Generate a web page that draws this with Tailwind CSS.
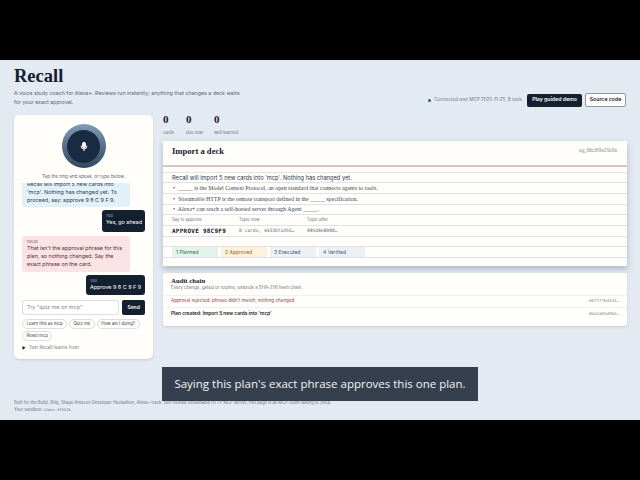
<!DOCTYPE html>
<html lang="en">
<head>
<meta charset="UTF-8">
<title>Recall</title>
<script src="https://cdn.jsdelivr.net/npm/@tailwindcss/browser@4"></script>
</head>
<body class="bg-black font-['Inter',sans-serif]">
<div class="w-[640px] h-[480px] flex flex-col overflow-hidden">
  <div class="h-[60px] bg-black shrink-0"></div>

  <main class="relative h-[360px] bg-[#e3eaf2] px-[14px] overflow-hidden">
    <!-- Header -->
    <header class="flex justify-between h-[55px]">
      <div class="w-[226px]">
        <h1 class="mt-[5px] font-['Liberation_Serif',serif] font-bold text-[18.5px] leading-[22px] text-[#14202f]">Recall</h1>
        <p class="mt-[2px] text-[5.3px] leading-[8.5px] text-[#5b6675]">A voice study coach for Alexa+. Reviews run instantly; anything that changes a deck waits for your exact approval.</p>
      </div>
      <div class="flex items-center h-[14px] mt-[33px]">
        <span class="w-[3px] h-[3px] rounded-full bg-[#1f6f5c] mr-[3px]"></span>
        <span class="text-[4.5px] text-[#6b7684] mr-[5px]">Connected over MCP 2025-11-25, 8 tools</span>
        <button class="h-[13px] w-[55px] rounded-[2px] bg-[#14202f] text-white text-[5.2px] font-semibold mr-[3px]">Play guided demo</button>
        <button class="h-[14px] w-[41px] rounded-[2px] border border-[#8d96a3] bg-[#fffefa] text-[#14202f] text-[5.2px] font-semibold">Source code</button>
      </div>
    </header>

    <div class="flex gap-[10px]">
      <!-- Voice and chat panel -->
      <section class="w-[139px] h-[244px] shrink-0 rounded-[5px] bg-[#fffefa] shadow-sm flex flex-col px-[8px]">
        <div class="mt-[9px] self-center w-[44px] h-[44px] rounded-full bg-gradient-to-b from-[#7f9cb6] to-[#34475e] flex items-center justify-center">
          <div class="w-[33px] h-[33px] rounded-full bg-[#1a2a40] flex items-center justify-center">
            <svg width="10" height="11" viewBox="0 0 24 24" fill="none" stroke="#fff" stroke-width="2.4" stroke-linecap="round">
              <rect x="8.5" y="2" width="7" height="13" rx="3.5" fill="#fff"></rect>
              <path d="M5 11a7 7 0 0 0 14 0M12 18v4"></path>
            </svg>
          </div>
        </div>
        <p class="mt-[5px] text-center text-[4.6px] leading-[7px] text-[#5b6675]">Tap the ring and speak, or type below.</p>

        <div class="mt-[3px] h-[112px] shrink-0 overflow-hidden flex flex-col justify-end gap-[3.5px]">
          <div class="w-[108px] shrink-0 rounded-[3px] bg-[#e2f1f8] px-[5px] pb-[3px] text-[5.4px] leading-[8px] text-[#2b3a4d]">
            <p>Recall will import 5 new cards into 'mcp'. Nothing has changed yet. To proceed, say: approve 9 8 C 9 F 9.</p>
          </div>
          <div class="self-end shrink-0 h-[22px] w-[43px] rounded-[3px] bg-[#14202f] px-[4px] pt-[3px] text-white">
            <p class="text-[3.8px] leading-[5px] text-[#aab4c0]">You</p>
            <p class="text-[5.4px] leading-[9px] whitespace-nowrap">Yes, go ahead</p>
          </div>
          <div class="w-[108px] shrink-0 h-[36px] rounded-[3px] bg-[#fae3e5] px-[5px] pt-[3px] text-[#5d2b35]">
            <p class="text-[3.8px] leading-[5px] text-[#85666c]">Recall</p>
            <p class="text-[5.4px] leading-[8px]">That isn't the approval phrase for this plan, so nothing changed. Say the exact phrase on the card.</p>
          </div>
          <div class="self-end shrink-0 h-[20px] w-[59px] rounded-[3px] bg-[#14202f] px-[4px] pt-[3px] text-white">
            <p class="text-[3.8px] leading-[5px] text-[#aab4c0]">You</p>
            <p class="text-[5.4px] leading-[9px] whitespace-nowrap">Approve 9 8 C 9 F 9</p>
          </div>
        </div>

        <div class="mt-[5px] flex gap-[3px]">
          <div class="w-[98px] h-[15px] rounded-[3px] border border-[#d9dee4] bg-white px-[4px] flex items-center text-[5.4px] text-[#7b8694]">Try "quiz me on mcp"</div>
          <button class="w-[23px] h-[15px] rounded-[2px] bg-[#14202f] text-white text-[5px] font-semibold">Send</button>
        </div>
        <div class="mt-[4px] flex flex-wrap gap-x-[2px] gap-y-[2px]">
          <span class="h-[10px] px-[3.5px] rounded-full border border-[#d9dee4] text-[4.3px] leading-[8px] text-[#2b3a4d]">Learn this as mcp</span>
          <span class="h-[10px] px-[3.5px] rounded-full border border-[#d9dee4] text-[4.3px] leading-[8px] text-[#2b3a4d]">Quiz me</span>
          <span class="h-[10px] px-[3.5px] rounded-full border border-[#d9dee4] text-[4.3px] leading-[8px] text-[#2b3a4d]">How am I doing?</span>
          <span class="h-[10px] px-[3.5px] rounded-full border border-[#d9dee4] text-[4.3px] leading-[8px] text-[#2b3a4d]">Reset mcp</span>
        </div>
        <p class="mt-[4px] flex items-center gap-[3px] text-[4.2px] leading-[6px] tracking-[0.2px] text-[#5b6675]"><span class="text-[#14202f] text-[4px]">▶</span> Text Recall learns from</p>
      </section>

      <!-- Right column -->
      <div class="w-[464px] shrink-0">
        <div class="flex gap-[14px] h-[26px]">
          <div class="w-[9px]">
            <p class="-mt-[2px] font-['Liberation_Serif',serif] font-bold text-[11px] leading-[12px] text-[#14202f]">0</p>
            <p class="mt-[5px] text-[4.2px] leading-[6px] text-[#6b7684]">cards</p>
          </div>
          <div class="w-[14px]">
            <p class="-mt-[2px] font-['Liberation_Serif',serif] font-bold text-[11px] leading-[12px] text-[#14202f]">0</p>
            <p class="mt-[5px] text-[4.2px] leading-[6px] whitespace-nowrap text-[#6b7684]">due now</p>
          </div>
          <div>
            <p class="-mt-[2px] font-['Liberation_Serif',serif] font-bold text-[11px] leading-[12px] text-[#14202f]">0</p>
            <p class="mt-[5px] text-[4.2px] leading-[6px] whitespace-nowrap text-[#6b7684]">well learned</p>
          </div>
        </div>

        <!-- Import card -->
        <section class="h-[125px] bg-[#fffefa] shadow-[0_3px_6px_rgba(70,90,110,0.35)] flex flex-col">
          <div class="h-[26px] shrink-0 pl-[9px] pr-[10px] flex justify-between items-start border-b-2 border-[#dcc4c4]">
            <h2 class="mt-[4px] font-['Liberation_Serif',serif] font-bold text-[8.6px] leading-[12px] text-[#14202f]">Import a deck</h2>
            <span class="mt-[7px] text-[4.4px] leading-[6px] text-[#7b8694]">pg_98c9f9a25b9a</span>
          </div>
          <div class="h-[6px] shrink-0 border-b border-[#dfe3e8]"></div>
          <p class="h-[10px] pl-[9px] border-b border-[#dfe3e8] text-[5.7px] leading-[9px] text-[#2b3a4d]">Recall will import 5 new cards into 'mcp'. Nothing has changed yet.</p>
          <p class="h-[11px] pl-[10px] border-b border-[#dfe3e8] font-['Liberation_Serif',serif] text-[5.9px] leading-[10px] text-[#3c4858]">•&nbsp; _____ is the Model Context Protocol, an open standard that connects agents to tools.</p>
          <p class="h-[11px] pl-[10px] border-b border-[#dfe3e8] font-['Liberation_Serif',serif] text-[5.9px] leading-[10px] text-[#3c4858]">•&nbsp; Streamable HTTP is the remote transport defined in the _____ specification.</p>
          <p class="h-[10px] pl-[10px] border-b border-[#dfe3e8] font-['Liberation_Serif',serif] text-[5.9px] leading-[9px] text-[#3c4858]">•&nbsp; Alexa+ can reach a self-hosted server through Agent _____.</p>
          <div class="h-[11px] pl-[9px] border-b border-[#dfe3e8] grid grid-cols-[67px_68px_1fr] text-[4.2px] leading-[10px] text-[#6b7684]">
            <span>Say to approve</span><span>Topic now</span><span>Topic after</span>
          </div>
          <div class="h-[11px] pl-[9px] border-b border-[#dfe3e8] grid grid-cols-[67px_68px_1fr] items-center font-['DejaVu_Sans_Mono',monospace] text-[4.6px] leading-[10px] text-[#5b6675]">
            <span class="font-bold text-[6px] tracking-[0.25px] text-[#14202f]">APPROVE 98C9F9</span><span>0 cards, 4433bfa355…</span><span>995d9e8000…</span>
          </div>
          <div class="h-[10px] shrink-0 border-b border-[#dfe3e8]"></div>
          <div class="h-[11px] pl-[9px] border-b border-[#dfe3e8] flex gap-[3px] text-[5px] leading-[10px]">
            <span class="w-[46px] pl-[4px] bg-[#e4f3ec] text-[#1f6f5c]">1 Planned</span>
            <span class="w-[46px] pl-[4px] bg-[#fcf2df] text-[#9c6a16]">2 Approved</span>
            <span class="w-[46px] pl-[4px] bg-[#edf1f6] text-[#4a5667]">3 Executed</span>
            <span class="w-[46px] pl-[4px] bg-[#edf1f6] text-[#4a5667]">4 Verified</span>
          </div>
        </section>

        <!-- Audit chain -->
        <section class="mt-[7px] h-[53px] rounded-[3px] bg-[#fffefa] shadow-sm pt-[3px]">
          <div class="h-[20px] pl-[8px] border-b border-[#f1f2f0]">
            <h2 class="font-['Liberation_Serif',serif] font-bold text-[6.8px] leading-[9px] text-[#14202f]">Audit chain</h2>
            <p class="text-[4.4px] leading-[6px] text-[#6b7684]">Every change, gated or routine, extends a SHA-256 hash chain.</p>
          </div>
          <div class="h-[12px] pl-[8px] pr-[8px] border-b border-[#f1f2f0] flex justify-between items-center text-[4.6px]">
            <span class="text-[#a0394a]">Approval rejected: phrase didn't match, nothing changed</span>
            <span class="font-['DejaVu_Sans_Mono',monospace] text-[4.2px] text-[#7b8694]">ebf7776d434…</span>
          </div>
          <div class="h-[12px] pl-[8px] pr-[8px] flex justify-between items-center text-[4.8px]">
            <span class="font-semibold text-[#14202f]">Plan created: Import 5 new cards into 'mcp'</span>
            <span class="font-['DejaVu_Sans_Mono',monospace] text-[4.2px] text-[#7b8694]">dba1a03d9b5…</span>
          </div>
        </section>
      </div>
    </div>

    <!-- Footer -->
    <footer class="mt-[40px] text-[4.18px] leading-[7px] text-[#6b7684]">
      <p class="whitespace-nowrap">Built for the Build, Ship, Shape Amazon Developer Hackathon, Alexa+ track. Self-hosted Streamable HTTP MCP server; this page is an MCP client talking to /mcp.</p>
      <p>Your sandbox: <span class="font-['DejaVu_Sans_Mono',monospace] text-[3.8px]">v1dev-4f337b</span></p>
    </footer>

    <!-- Video caption -->
    <div class="absolute left-[162px] top-[307px] w-[316px] h-[34px] bg-[#363f4e] flex items-center justify-center font-['Open_Sans',sans-serif] text-[11.5px] text-[#f2f4f6] whitespace-nowrap">Saying this plan's exact phrase approves this one plan.</div>
  </main>

  <div class="h-[60px] bg-black shrink-0"></div>
</div>
</body>
</html>
